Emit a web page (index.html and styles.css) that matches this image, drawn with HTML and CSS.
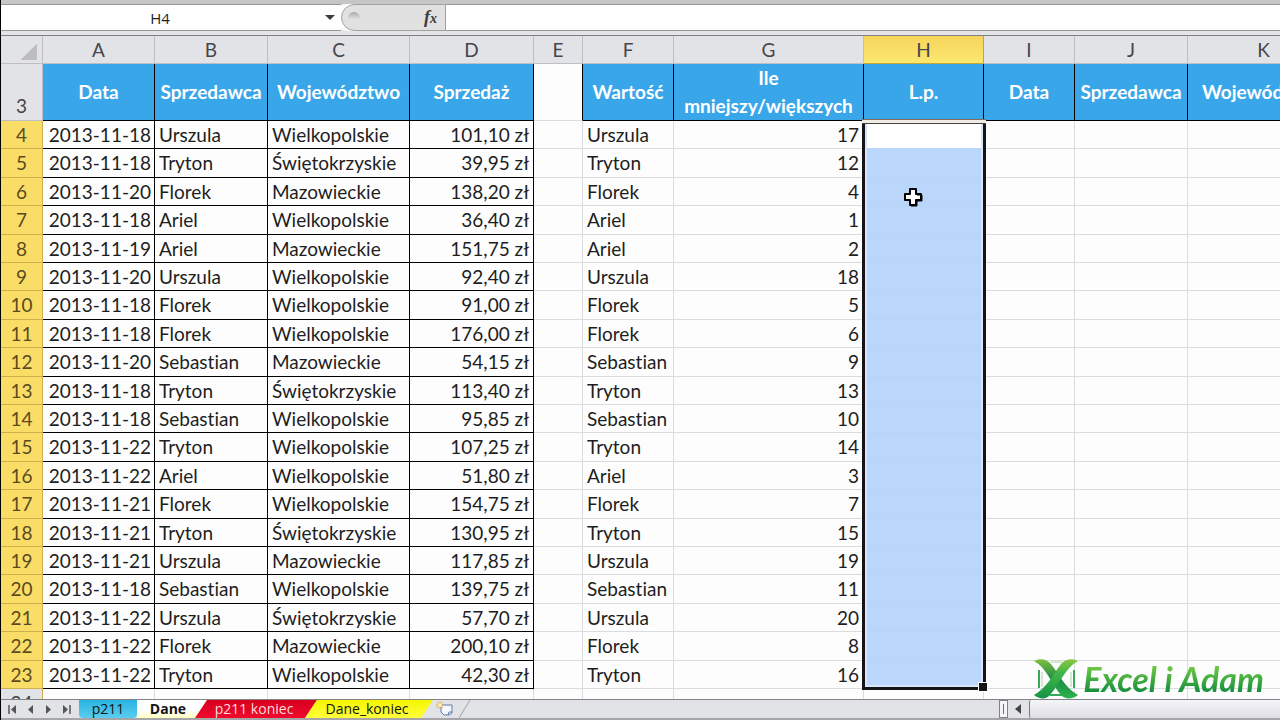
FILE: index.html
```html
<!DOCTYPE html>

<html lang="pl">

<head>

    <title>Excel i Adam</title>

    <meta charset="UTF-8">
    <meta name="viewport" content="width=device-width, initial-scale=1.0">

    <link rel="stylesheet" href="styles.css">

</head>

<body>

    <!-- FORMULA BAR -->
    <div class="formula-bar">
        <div class="name-box">
            <input type="text" value="H4" aria-label="Pole nazwy">
            <button class="name-arrow" aria-label="Lista nazw"></button>
        </div>
        <div class="fx-area">
            <span class="fx-grip"></span>
            <button class="fx" aria-label="Wstaw funkcję"><i>f</i><i class="x">x</i></button>
        </div>
        <input class="formula" type="text" aria-label="Pasek formuły">
    </div>

    <!-- SHEET -->
    <main class="sheet">
        <table>
            <colgroup>
                <col class="w-num"><col class="w-a"><col class="w-b"><col class="w-c"><col class="w-d"><col class="w-e">
                <col class="w-f"><col class="w-g"><col class="w-h"><col class="w-i"><col class="w-j"><col class="w-k">
            </colgroup>
            <thead>
                <tr class="letters">
                    <th class="corner"></th><th>A</th><th>B</th><th>C</th><th>D</th><th>E</th><th>F</th><th>G</th><th class="on">H</th><th>I</th><th>J</th><th>K</th>
                </tr>
                <tr class="titles">
                    <th>3</th><th>Data</th><th>Sprzedawca</th><th>Województwo</th><th>Sprzedaż</th><td></td><th>Wartość</th><th>Ile mniejszy/większych</th><th>L.p.</th><th>Data</th><th>Sprzedawca</th><th>Województwo</th>
                </tr>
            </thead>
            <tbody>
                <tr><th>4</th><td>2013-11-18</td><td>Urszula</td><td>Wielkopolskie</td><td>101,10 zł</td><td></td><td>Urszula</td><td>17</td><td class="active"><div class="selection"></div></td><td></td><td></td><td></td></tr>
                <tr><th>5</th><td>2013-11-18</td><td>Tryton</td><td>Świętokrzyskie</td><td>39,95 zł</td><td></td><td>Tryton</td><td>12</td><td></td><td></td><td></td><td></td></tr>
                <tr><th>6</th><td>2013-11-20</td><td>Florek</td><td>Mazowieckie</td><td>138,20 zł</td><td></td><td>Florek</td><td>4</td><td></td><td></td><td></td><td></td></tr>
                <tr><th>7</th><td>2013-11-18</td><td>Ariel</td><td>Wielkopolskie</td><td>36,40 zł</td><td></td><td>Ariel</td><td>1</td><td></td><td></td><td></td><td></td></tr>
                <tr><th>8</th><td>2013-11-19</td><td>Ariel</td><td>Mazowieckie</td><td>151,75 zł</td><td></td><td>Ariel</td><td>2</td><td></td><td></td><td></td><td></td></tr>
                <tr><th>9</th><td>2013-11-20</td><td>Urszula</td><td>Wielkopolskie</td><td>92,40 zł</td><td></td><td>Urszula</td><td>18</td><td></td><td></td><td></td><td></td></tr>
                <tr><th>10</th><td>2013-11-18</td><td>Florek</td><td>Wielkopolskie</td><td>91,00 zł</td><td></td><td>Florek</td><td>5</td><td></td><td></td><td></td><td></td></tr>
                <tr><th>11</th><td>2013-11-18</td><td>Florek</td><td>Wielkopolskie</td><td>176,00 zł</td><td></td><td>Florek</td><td>6</td><td></td><td></td><td></td><td></td></tr>
                <tr><th>12</th><td>2013-11-20</td><td>Sebastian</td><td>Mazowieckie</td><td>54,15 zł</td><td></td><td>Sebastian</td><td>9</td><td></td><td></td><td></td><td></td></tr>
                <tr><th>13</th><td>2013-11-18</td><td>Tryton</td><td>Świętokrzyskie</td><td>113,40 zł</td><td></td><td>Tryton</td><td>13</td><td></td><td></td><td></td><td></td></tr>
                <tr><th>14</th><td>2013-11-18</td><td>Sebastian</td><td>Wielkopolskie</td><td>95,85 zł</td><td></td><td>Sebastian</td><td>10</td><td></td><td></td><td></td><td></td></tr>
                <tr><th>15</th><td>2013-11-22</td><td>Tryton</td><td>Wielkopolskie</td><td>107,25 zł</td><td></td><td>Tryton</td><td>14</td><td></td><td></td><td></td><td></td></tr>
                <tr><th>16</th><td>2013-11-22</td><td>Ariel</td><td>Wielkopolskie</td><td>51,80 zł</td><td></td><td>Ariel</td><td>3</td><td></td><td></td><td></td><td></td></tr>
                <tr><th>17</th><td>2013-11-21</td><td>Florek</td><td>Wielkopolskie</td><td>154,75 zł</td><td></td><td>Florek</td><td>7</td><td></td><td></td><td></td><td></td></tr>
                <tr><th>18</th><td>2013-11-21</td><td>Tryton</td><td>Świętokrzyskie</td><td>130,95 zł</td><td></td><td>Tryton</td><td>15</td><td></td><td></td><td></td><td></td></tr>
                <tr><th>19</th><td>2013-11-21</td><td>Urszula</td><td>Mazowieckie</td><td>117,85 zł</td><td></td><td>Urszula</td><td>19</td><td></td><td></td><td></td><td></td></tr>
                <tr><th>20</th><td>2013-11-18</td><td>Sebastian</td><td>Wielkopolskie</td><td>139,75 zł</td><td></td><td>Sebastian</td><td>11</td><td></td><td></td><td></td><td></td></tr>
                <tr><th>21</th><td>2013-11-22</td><td>Urszula</td><td>Świętokrzyskie</td><td>57,70 zł</td><td></td><td>Urszula</td><td>20</td><td></td><td></td><td></td><td></td></tr>
                <tr><th>22</th><td>2013-11-22</td><td>Florek</td><td>Mazowieckie</td><td>200,10 zł</td><td></td><td>Florek</td><td>8</td><td></td><td></td><td></td><td></td></tr>
                <tr><th>23</th><td>2013-11-22</td><td>Tryton</td><td>Wielkopolskie</td><td>42,30 zł</td><td></td><td>Tryton</td><td>16</td><td></td><td></td><td></td><td></td></tr>
                <tr class="blank"><th>24</th><td></td><td></td><td></td><td></td><td></td><td></td><td></td><td></td><td></td><td></td><td></td></tr>
            </tbody>
        </table>

        <svg class="cursor" width="20" height="20" viewBox="0 0 20 20">
            <path d="M7 2h6v5h5v6h-5v5H7v-5H2V7h5z" fill="#fff" stroke="#000" stroke-width="2" stroke-linejoin="round"/>
            <path d="M14 8v0h5v6h-5v5H8" fill="none" stroke="#000" stroke-width="1"/>
        </svg>

        <div class="logo">
            <svg width="46" height="40" viewBox="0 0 46 40">
                <defs>
                    <linearGradient id="green" x1="0" y1="0" x2="0" y2="1">
                        <stop offset="0" stop-color="#8cc63f"/>
                        <stop offset=".35" stop-color="#3fb549"/>
                        <stop offset="1" stop-color="#159447"/>
                    </linearGradient>
                    <linearGradient id="dark" x1="0" y1="0" x2="0" y2="1">
                        <stop offset="0" stop-color="#7cc142"/>
                        <stop offset=".5" stop-color="#1f8a42"/>
                        <stop offset="1" stop-color="#2bb34b"/>
                    </linearGradient>
                </defs>
                <path d="M6 11v18M41 11v18M17 36h12" stroke="#35a957" stroke-width="2" fill="none"/>
                <path d="M9 13v15M38 13v15M18 3h11" stroke="#a5d99b" stroke-width="1" fill="none"/>
                <path d="M1 2C7-1 14 0 18 5c8 10 14 24 27 31-5 4-13 5-17 0C19 26 14 9 1 2z" fill="url(#dark)"/>
                <path d="M45 2C39-1 32 0 28 5 20 15 14 29 1 36c5 4 12 5 16 0C26 26 32 9 45 2z" fill="url(#green)"/>
            </svg>
            <span>Excel i Adam</span>
        </div>
    </main>

    <!-- SHEET TABS -->
    <footer class="tab-bar">
        <div class="arrows">
            <button aria-label="Pierwszy arkusz"><svg width="9" height="9"><path d="M1 0v9" stroke="#555" stroke-width="1.5"/><path d="M8 0v9L3 4.500z" fill="#555"/></svg></button>
            <button aria-label="Poprzedni arkusz"><svg width="9" height="9"><path d="M7 0v9L2 4.500z" fill="#555"/></svg></button>
            <button aria-label="Następny arkusz"><svg width="9" height="9"><path d="M2 0v9l5-4.500z" fill="#555"/></svg></button>
            <button aria-label="Ostatni arkusz"><svg width="9" height="9"><path d="M8 0v9" stroke="#555" stroke-width="1.5"/><path d="M1 0v9l5-4.500z" fill="#555"/></svg></button>
        </div>
        <div class="tabs">
            <button class="tab blue">p211</button>
            <button class="tab current">Dane</button>
            <button class="tab red">p211 koniec</button>
            <button class="tab yellow">Dane_koniec</button>
            <button class="tab new" aria-label="Wstaw arkusz">
                <svg width="46" height="18" viewBox="0 0 46 18">
                    <path d="M45 0L34 18" stroke="#a0a0a5" fill="none"/>
                    <path d="M16 5h11v8l-3 2h-5l-3-3z" fill="#f4f7fc" stroke="#5f7ba8"/>
                    <path d="M23 15l1-3h3" fill="#dde6f3" stroke="#5f7ba8"/>
                    <path d="M15 1v8M11 5h8M12 2l6 6M18 2l-6 6" stroke="#d9a441"/>
                    <circle cx="15" cy="5" r="2" fill="#fff3b8"/>
                </svg>
            </button>
        </div>
        <div class="scroll">
            <span class="splitter"></span>
            <button class="scroll-left" aria-label="Przewiń w lewo"><svg width="8" height="12"><path d="M7 1v10L1 6z" fill="#444"/></svg></button>
            <span class="thumb"></span>
        </div>
    </footer>

</body>

</html>
```

FILE: styles.css
```css
* {
    box-sizing: border-box;
    padding: 0;
    margin: 0;
}
body {
    height: 100vh;
    display: flex;
    flex-direction: column;
    overflow: hidden;
    background-color: rgb(226,227,231);
    border-left: 1px solid black;
    font-family: Lato, Carlito, sans-serif;
    font-size: 19px;
    font-variant-ligatures: none;
    color: rgb(30,30,30);
}
button, input {
    border: none;
    background: none;
    font: inherit;
    color: inherit;
    outline: none;
}

/* formula bar */
.formula-bar {
    display: flex;
    flex: none;
    height: 36px;
    padding-bottom: 4px;
    border-top: 4px solid rgb(198,198,200);
    border-bottom: 1px solid rgb(128,128,130);
    background-color: rgb(228,228,231);
}
.name-box {
    display: flex;
    width: 340px;
    background-color: white;
    border-top: 1px solid rgb(150,150,150);
    border-bottom: 1px solid rgb(150,150,150);
}
.name-box input {
    flex: 1;
    min-width: 0;
    text-align: center;
    font-family: "Open Sans", sans-serif;
    font-size: 15px;
}
.name-arrow {
    width: 22px;
    display: grid;
    place-items: center;
}
.name-arrow::before {
    content: "";
    border: 5px solid transparent;
    border-top-color: rgb(60,60,60);
    border-bottom: none;
}
.fx-area {
    display: flex;
    justify-content: space-between;
    align-items: center;
    width: 105px;
    padding: 0 8px 0 6px;
    border: 1px solid rgb(160,160,160);
    border-radius: 14px 0 0 14px;
    background-color: rgb(225,225,226);
    box-shadow: -6px 0 white;
}
.fx-grip {
    width: 12px;
    height: 12px;
    border-radius: 50%;
    background: linear-gradient(rgb(170,170,170), rgb(225,225,226) 60%);
}
.fx {
    font-family: "Liberation Serif", serif;
    font-weight: bold;
    font-size: 18px;
    line-height: 20px;
    color: rgb(60,60,60);
}
.fx .x {
    font-size: 14px;
}
.formula {
    flex: 1;
    min-width: 0;
    background-color: white;
    border-top: 1px solid rgb(150,150,150);
    border-bottom: 1px solid rgb(150,150,150);
}

/* sheet */
.sheet {
    position: relative;
    flex: 1;
    min-height: 0;
    overflow: hidden;
    background-color: rgb(253,253,253);
}
table {
    table-layout: fixed;
    width: 1339px;
    border-collapse: separate;
    border-spacing: 0;
}
.w-num { width: 42px; }
.w-a { width: 112px; }
.w-b { width: 113px; }
.w-c { width: 142px; }
.w-d { width: 124px; }
.w-e { width: 49px; }
.w-f { width: 91px; }
.w-g { width: 190px; }
.w-h { width: 120px; }
.w-i { width: 91px; }
.w-j { width: 113px; }
.w-k { width: 152px; }
td, th {
    border-right: 1px solid rgb(218,220,226);
    border-bottom: 1px solid rgb(218,220,226);
    white-space: nowrap;
    line-height: 24px;
}
.letters th {
    height: 28px;
    font-weight: normal;
    color: rgb(70,70,75);
    background-color: rgb(226,227,231);
    border-color: rgb(190,191,196);
}
.letters .on {
    background: linear-gradient(rgb(246,212,92), rgb(252,232,112));
    border-color: rgb(200,165,50);
}
.letters .corner {
    background: linear-gradient(135deg, transparent 50%, rgb(190,190,192) 50%) no-repeat 20px 8px / 16px 16px rgb(226,227,231);
}
.titles th {
    height: 57px;
    line-height: 28px;
    white-space: normal;
    color: white;
    background-color: rgb(58,166,234);
    border-color: black;
}
.titles td {
    border-right-color: black;
}
.titles th:first-child {
    vertical-align: bottom;
    font-weight: normal;
    color: rgb(70,70,75);
    background-color: rgb(226,227,231);
    border-color: rgb(190,191,196);
}
tbody tr {
    height: 28px;
}
/* a row is 21.3pt high, so two in five get the spare pixel */
tbody tr:nth-child(5n+2), tbody tr:nth-child(5n+4) {
    height: 29px;
}
tbody th {
    font-weight: normal;
    color: rgb(90,75,30);
    background-color: rgb(250,221,102);
    border-color: rgb(205,175,80);
}
tbody td {
    padding: 0 4px;
}
tbody td:nth-child(2), tbody td:nth-child(5), tbody td:nth-child(8) {
    text-align: right;
}
tbody td:nth-child(2) {
    padding-right: 3px;
}
tbody td:nth-child(-n+5) {
    border-color: black;
}
tbody td:nth-child(9) {
    background-color: rgb(186,214,250);
    border-bottom-color: rgb(184,212,244);
}
tbody td.active {
    position: relative;
    background-color: white;
}
tbody .blank th {
    color: rgb(70,70,75);
    background-color: rgb(226,227,231);
}
tbody .blank td {
    border-color: rgb(218,220,226);
    background-color: transparent;
}
.selection {
    position: absolute;
    top: -2px;
    left: -2px;
    right: -3px;
    height: 571px;
    border: 3px solid rgb(20,20,25);
    border-top: none;
    box-shadow: inset 0 0 0 2px rgb(215,229,248);
}
.selection::before {
    content: "";
    position: absolute;
    top: 0;
    left: -3px;
    right: -3px;
    height: 3px;
    background-color: rgb(240,236,228);
    border-top: 1px solid rgb(130,110,90);
    border-bottom: 1px solid rgb(70,70,70);
}
.selection::after {
    content: "";
    position: absolute;
    right: -5px;
    bottom: -5px;
    width: 8px;
    height: 8px;
    background-color: rgb(20,20,25);
    border: 1px solid white;
}
.cursor {
    position: absolute;
    top: 151px;
    left: 902px;
}
.logo {
    position: absolute;
    right: 16px;
    bottom: 0;
    display: flex;
    align-items: center;
    gap: 4px;
}
.logo span {
    font-size: 34px;
    line-height: 40px;
    font-weight: bold;
    font-style: italic;
    color: transparent;
    background: linear-gradient(rgb(110,200,70) 20%, rgb(25,145,60) 80%);
    background-clip: text;
    -webkit-background-clip: text;
}

/* bottom bar */
.tab-bar {
    display: flex;
    flex: none;
    height: 21px;
    border-top: 1px solid rgb(130,130,135);
    border-bottom: 2px solid rgb(165,165,170);
    font-family: "Open Sans", sans-serif;
    font-size: 14px;
}
.arrows {
    display: flex;
    width: 78px;
    padding-left: 2px;
}
.arrows button {
    width: 18px;
    display: grid;
    place-items: center;
}
.tabs {
    display: flex;
    flex: 1;
}
.tab {
    line-height: 18px;
    height: 18px;
    text-align: center;
    color: rgb(20,20,20);
}
.blue {
    width: 58px;
    background: linear-gradient(rgb(40,180,225), rgb(90,205,240));
    border-radius: 0 0 4px 4px;
}
.current {
    width: 70px;
    padding-right: 8px;
    font-weight: bold;
    background: linear-gradient(white 60%, rgb(255,255,190));
    clip-path: polygon(0 0, 100% 0, calc(100% - 12px) 100%, 0 100%);
}
.red {
    width: 122px;
    margin-left: -12px;
    padding-right: 4px;
    color: rgb(255,220,220);
    background: linear-gradient(rgb(215,0,30), rgb(240,10,45));
    clip-path: polygon(12px 0, 100% 0, calc(100% - 12px) 100%, 0 100%);
}
.yellow {
    width: 128px;
    margin-left: -12px;
    padding-right: 4px;
    background: linear-gradient(rgb(245,245,0), rgb(255,255,60));
    clip-path: polygon(12px 0, 100% 0, calc(100% - 12px) 100%, 0 100%);
}
.new {
    display: grid;
    margin-left: -8px;
}
.scroll {
    display: flex;
    align-items: center;
    width: 281px;
}
.splitter {
    width: 9px;
    height: 18px;
    margin-right: 5px;
    border: 1px solid rgb(130,130,135);
    background: linear-gradient(90deg, transparent 3px, rgb(110,110,115) 3px, rgb(110,110,115) 4px, transparent 4px) no-repeat center / 100% 10px rgb(245,245,247);
}
.scroll-left {
    width: 10px;
    display: grid;
    place-items: center;
}
.thumb {
    flex: 1;
    height: 18px;
    margin-left: 6px;
    border-left: 1px solid rgb(120,120,125);
    border-radius: 2px 0 0 2px;
    background: linear-gradient(rgb(245,245,248), rgb(222,223,230));
}
```
